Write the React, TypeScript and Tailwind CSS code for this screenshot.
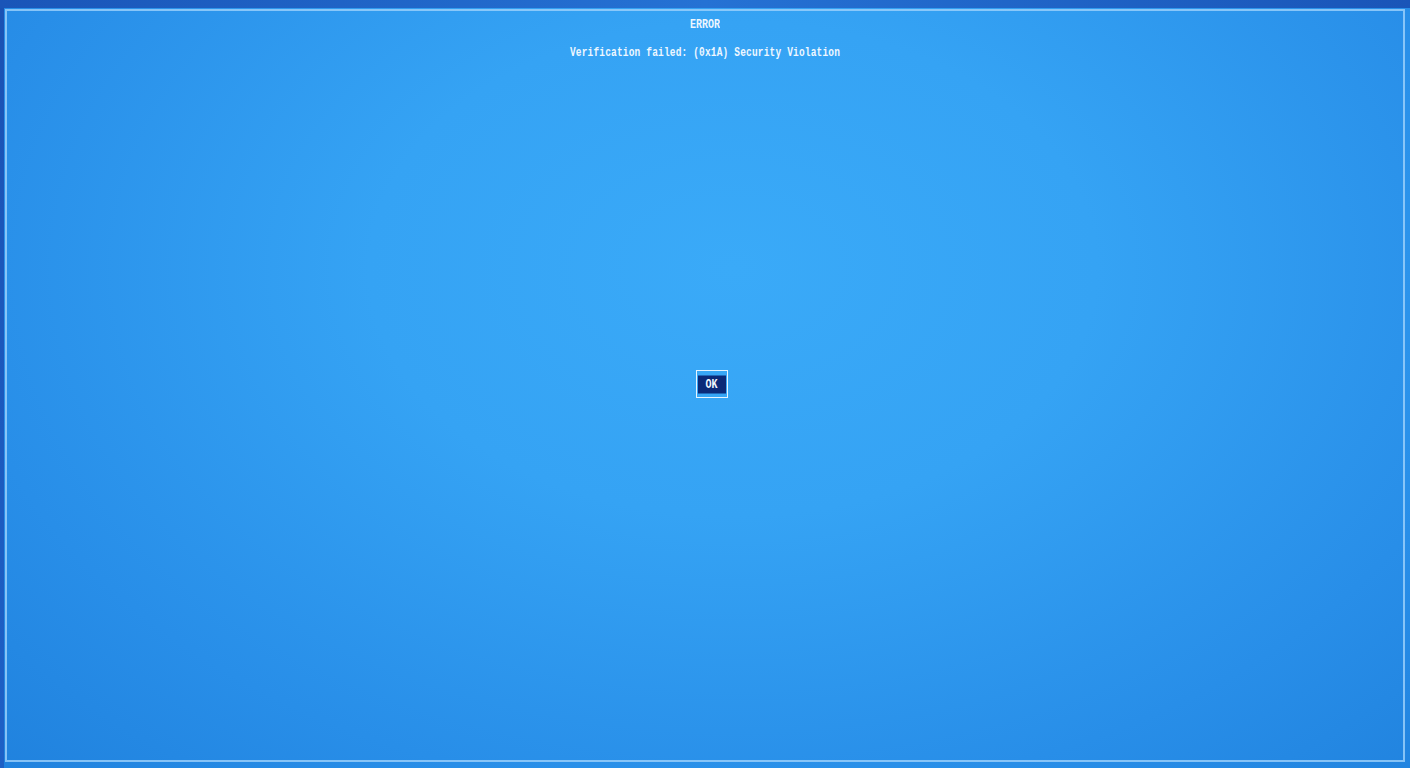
const lines = ["Verification failed: (0x1A) Security Violation"];

const App = () => {
  return (
    <div className="w-[1410px] h-[768px] overflow-hidden bg-[radial-gradient(ellipse_at_52%_35%,#3aaaf8_0%,#35a3f4_35%,#288ee8_75%,#2082de_100%)] font-['Liberation_Mono',monospace]">
      {/* top dark band */}
      <div className="h-[8px] bg-gradient-to-r from-[#1a55b8] via-[#2572d4] to-[#1a55b8]" />
      <div className="flex h-[760px]">
        <div className="w-[4px] bg-gradient-to-b from-[#1a52b4] to-[#1d60c6]" />
        <div className="flex-1 flex flex-col mt-[1px] ml-[1px] mr-[5px] mb-[6px] border-2 border-[#9fd2fb]/80">
          <div className="flex flex-col items-center text-[#eef7ff] font-bold">
            <div className="mt-[7px] text-[10px] leading-[14px] scale-y-[1.35]">ERROR</div>
            {lines.map((l) => (
              <div key={l} className="mt-[14px] text-[9.5px] tracking-[0.17px] leading-[14px] scale-y-[1.35] whitespace-pre">
                {l}
              </div>
            ))}
          </div>
          <div className="flex justify-center mt-[310px] pl-[13px]">
            <div className="w-[32px] h-[28px] border border-[#e6f4ff] flex flex-col justify-center p-[1px]">
              <div className="h-[15px] bg-[#0b2a78] flex items-center justify-center text-[#f2f8ff] font-bold text-[10px] scale-y-[1.2]">
                OK
              </div>
            </div>
          </div>
        </div>
      </div>
    </div>
  );
};

export default App;
